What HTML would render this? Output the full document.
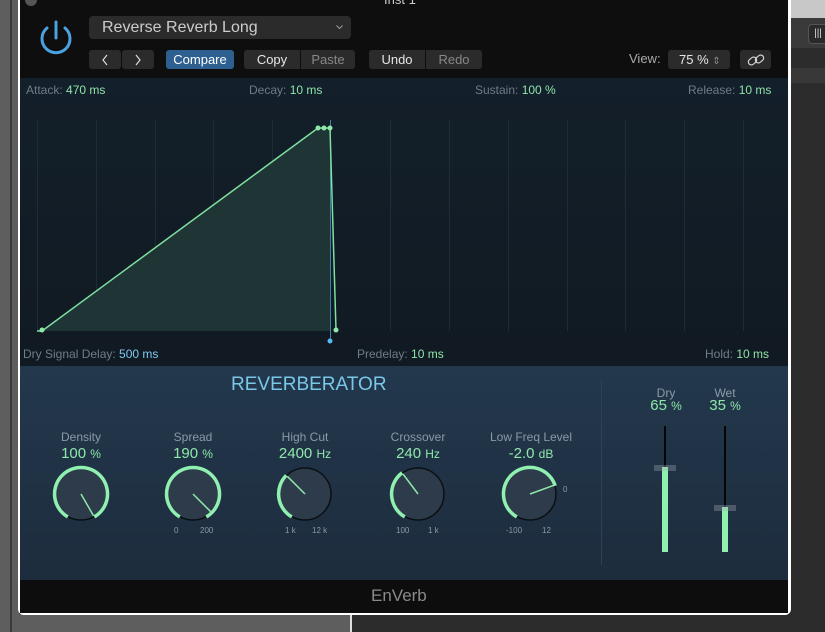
<!DOCTYPE html>
<html><head><meta charset="utf-8"><style>
*{margin:0;padding:0;box-sizing:border-box}
body{width:825px;height:632px;overflow:hidden;position:relative;background:#2c2c2c;font-family:"Liberation Sans",sans-serif}
.a{position:absolute}
.btn{position:absolute;height:19px;background:#2b2b2b;color:#e6e6e6;font-size:13px;line-height:19px;text-align:center;border-radius:3px}
.lbl{position:absolute;font-size:12px;color:#6f7c88}
.lbl b{font-weight:normal;color:#8fe3a8}
.kt{position:absolute;text-align:center;width:110px;color:#8a9aa8;font-size:12px}
.kv{position:absolute;text-align:center;width:110px;color:#8fe8aa;font-size:15px}
.kv small{font-size:12px}
.sc{position:absolute;font-size:8px;color:#8a9aa8}
</style></head><body>
<div class="a" style="left:0;top:0;width:19px;height:632px;background:#5e5e5e"></div>
<div class="a" style="left:10px;top:0;width:2px;height:632px;background:#3a3a3a"></div>
<div class="a" style="left:19px;top:614px;width:331px;height:18px;background:#5e5e5e"></div>
<div class="a" style="left:350px;top:614px;width:2px;height:18px;background:#ddd"></div>
<div class="a" style="left:790px;top:0;width:35px;height:18px;background:#c8c8c8"></div>
<div class="a" style="left:790px;top:18px;width:35px;height:30px;background:#3a3a3a"></div>
<div class="a" style="left:808px;top:24px;width:20px;height:20px;border:1px solid #555;border-radius:4px;background:#2a2a2a;color:#ddd;font-size:10px;line-height:18px;text-align:center">|||</div>
<div class="a" style="left:790px;top:68px;width:35px;height:15px;background:#383838"></div>
<!-- window -->
<div class="a" style="left:18px;top:-5px;width:773px;height:620px;background:#fff;border-radius:6px"></div>
<div class="a" style="left:20px;top:-5px;width:768px;height:618px;background:#0e0e0e;border-radius:5px;overflow:hidden">
</div>
<div class="a" style="left:384px;top:-8px;color:#ccc;font-size:13px">Inst 1</div>
<div class="a" style="left:25px;top:-6px;width:12px;height:12px;border-radius:6px;background:#555"></div>
<svg class="a" style="left:36px;top:18px" width="40" height="40"><path d="M11 10 A14 14 0 1 0 29 10" fill="none" stroke="#4aa3e0" stroke-width="3" stroke-linecap="round"/><line x1="20" y1="4" x2="20" y2="20" stroke="#4aa3e0" stroke-width="3" stroke-linecap="round"/></svg>
<div class="a" style="left:89px;top:16px;width:262px;height:23px;background:#2b2b2b;border-radius:4px;color:#ccc;font-size:16px;line-height:23px;padding-left:13px">Reverse Reverb Long<svg style="position:absolute;right:8px;top:9px" width="7" height="5"><path d="M0.5 0.5 L3.5 3.5 L6.5 0.5" fill="none" stroke="#999" stroke-width="1"/></svg></div>
<div class="btn" style="left:89px;top:50px;width:32px"><svg width="8" height="12" style="margin-top:4px"><path d="M6 1 L2 6 L6 11" fill="none" stroke="#ddd" stroke-width="1.2"/></svg></div>
<div class="btn" style="left:122px;top:50px;width:32px"><svg width="8" height="12" style="margin-top:4px"><path d="M2 1 L6 6 L2 11" fill="none" stroke="#ddd" stroke-width="1.2"/></svg></div>
<div class="btn" style="left:166px;top:50px;width:68px;background:#2e5f91;color:#fff">Compare</div>
<div class="btn" style="left:244px;top:50px;width:56px;border-radius:3px 0 0 3px">Copy</div>
<div class="btn" style="left:301px;top:50px;width:54px;color:#888;border-radius:0 3px 3px 0">Paste</div>
<div class="btn" style="left:369px;top:50px;width:56px;border-radius:3px 0 0 3px">Undo</div>
<div class="btn" style="left:426px;top:50px;width:56px;color:#888;border-radius:0 3px 3px 0">Redo</div>
<div class="a" style="left:629px;top:51px;color:#aaa;font-size:13px">View:</div>
<div class="btn" style="left:668px;top:50px;width:62px;text-align:left;padding-left:11px">75 % <span style="color:#888;font-size:10px">⇕</span></div>
<div class="btn" style="left:740px;top:50px;width:31px"><svg width="20" height="14" style="margin-top:3px"><rect x="2" y="5" width="9" height="6" rx="3" transform="rotate(-40 6.5 8)" fill="none" stroke="#ddd" stroke-width="1.1"/><rect x="9" y="3" width="9" height="6" rx="3" transform="rotate(-40 13.5 6)" fill="none" stroke="#ddd" stroke-width="1.1"/></svg></div>
<!-- graph -->
<div class="a" style="left:20px;top:78px;width:768px;height:288px;background:linear-gradient(#131f2a,#111a22)"></div>
<svg class="a" style="left:20px;top:78px" width="768" height="288">
<g stroke="#1e2c38" stroke-width="1">
<line x1="17.5" y1="42" x2="17.5" y2="253"/><line x1="76.5" y1="42" x2="76.5" y2="253"/><line x1="135.5" y1="42" x2="135.5" y2="253"/><line x1="193.5" y1="42" x2="193.5" y2="253"/><line x1="252.5" y1="42" x2="252.5" y2="253"/><line x1="370.5" y1="42" x2="370.5" y2="253"/><line x1="429.5" y1="42" x2="429.5" y2="253"/><line x1="488.5" y1="42" x2="488.5" y2="253"/><line x1="547.5" y1="42" x2="547.5" y2="253"/><line x1="605.5" y1="42" x2="605.5" y2="253"/><line x1="664.5" y1="42" x2="664.5" y2="253"/><line x1="723.5" y1="42" x2="723.5" y2="253"/>
</g>
<polygon points="17,253 22,253 298,50 310,50 310,253" fill="#1f3434"/>
<line x1="310.5" y1="42" x2="310.5" y2="263" stroke="#3d7ea8" stroke-width="1"/>
<polyline points="17,253 22,253 298,50 310,50 316,252" fill="none" stroke="#7fe0a0" stroke-width="1.5"/>
<g fill="#8fe8aa"><circle cx="22" cy="252" r="2.5"/><circle cx="298" cy="50" r="2.5"/><circle cx="304" cy="50" r="2.5"/><circle cx="310" cy="50" r="2.5"/><circle cx="316" cy="252" r="2.5"/></g>
<circle cx="310" cy="263" r="2.5" fill="#5ab8f0"/>
</svg>
<div class="lbl" style="left:26px;top:83px">Attack: <b>470 ms</b></div>
<div class="lbl" style="left:249px;top:83px">Decay: <b>10 ms</b></div>
<div class="lbl" style="left:475px;top:83px">Sustain: <b>100 %</b></div>
<div class="lbl" style="left:688px;top:83px">Release: <b>10 ms</b></div>
<div class="lbl" style="left:23px;top:347px">Dry Signal Delay: <b style="color:#7cc8f0">500 ms</b></div>
<div class="lbl" style="left:357px;top:347px">Predelay: <b>10 ms</b></div>
<div class="lbl" style="left:705px;top:347px">Hold: <b>10 ms</b></div>
<!-- lower -->
<div class="a" style="left:20px;top:366px;width:768px;height:214px;background:linear-gradient(#23384d,#1d2c3d)"></div>
<div class="a" style="left:601px;top:380px;width:1px;height:185px;background:#2c4258"></div>
<div class="a" style="left:231px;top:374px;color:#79c8e8;font-size:19px">REVERBERATOR</div>
<div class="a" style="left:20px;top:580px;width:768px;height:33px;background:#0d0d0d"></div>
<div class="a" style="left:371px;top:586px;color:#8a8a8a;font-size:17px">EnVerb</div>
<div class="kt" style="left:26px;top:430px">Density</div><div class="kv" style="left:26px;top:445px">100 <small>%</small></div>
<div class="kt" style="left:138px;top:430px">Spread</div><div class="kv" style="left:138px;top:445px">190 <small>%</small></div>
<div class="kt" style="left:250px;top:430px">High Cut</div><div class="kv" style="left:250px;top:445px">2400 <small>Hz</small></div>
<div class="kt" style="left:363px;top:430px">Crossover</div><div class="kv" style="left:363px;top:445px">240 <small>Hz</small></div>
<div class="kt" style="left:476px;top:430px">Low Freq Level</div><div class="kv" style="left:476px;top:445px">-2.0 <small>dB</small></div>
<svg id="k" class="a" style="left:0;top:0" width="825" height="632"></svg>
<div class="sc" style="left:174px;top:526px">0</div><div class="sc" style="left:200px;top:526px">200</div>
<div class="sc" style="left:285px;top:526px">1 k</div><div class="sc" style="left:312px;top:526px">12 k</div>
<div class="sc" style="left:396px;top:526px">100</div><div class="sc" style="left:428px;top:526px">1 k</div>
<div class="sc" style="left:506px;top:526px">-100</div><div class="sc" style="left:542px;top:526px">12</div>
<div class="sc" style="left:563px;top:485px">0</div>
<div class="kt" style="left:611px;top:386px">Dry</div><div class="kv" style="left:611px;top:397px">65 <small>%</small></div>
<div class="kt" style="left:670px;top:386px">Wet</div><div class="kv" style="left:670px;top:397px">35 <small>%</small></div>
<div class="a" style="left:664px;top:426px;width:2px;height:126px;background:#050505"></div>
<div class="a" style="left:662px;top:467px;width:6px;height:85px;background:#8ff0b0"></div>
<div class="a" style="left:654px;top:465px;width:22px;height:6px;background:rgba(160,170,180,.35)"></div>
<div class="a" style="left:724px;top:426px;width:2px;height:126px;background:#050505"></div>
<div class="a" style="left:722px;top:507px;width:6px;height:45px;background:#8ff0b0"></div>
<div class="a" style="left:714px;top:505px;width:22px;height:6px;background:rgba(160,170,180,.35)"></div>
<script>
var s='',K=[[81,494,150,150],[193,494,150,135],[305,494,-45,-45],[418,494,-37,-37],[530,494,72,70]];
function p(cx,cy,a,r){a=a*Math.PI/180;return[(cx+r*Math.sin(a)).toFixed(1),(cy-r*Math.cos(a)).toFixed(1)]}
K.forEach(function(k){var cx=k[0],cy=k[1];
s+='<circle cx="'+cx+'" cy="'+cy+'" r="26" fill="#2e3b4b" stroke="#0a0f14" stroke-width="1.5"/>';
var a=p(cx,cy,-150,26.5),b=p(cx,cy,k[2],26.5),l=(k[2]+150)>180?1:0;
s+='<path d="M'+a+' A26.5 26.5 0 '+l+' 1 '+b+'" fill="none" stroke="#8ff0b0" stroke-width="3.5"/>';
var q=p(cx,cy,k[3],25);s+='<line x1="'+cx+'" y1="'+cy+'" x2="'+q[0]+'" y2="'+q[1]+'" stroke="#8fe8aa" stroke-width="1.5"/>';});
document.getElementById('k').innerHTML=s;
</script>
</body></html>
